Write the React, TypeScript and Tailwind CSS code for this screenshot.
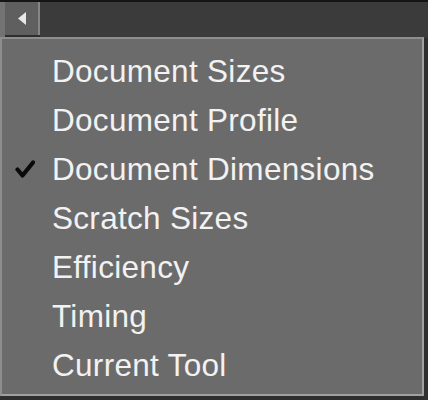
const items = [
  { label: 'Document Sizes' },
  { label: 'Document Profile' },
  { label: 'Document Dimensions', checked: true },
  { label: 'Scratch Sizes' },
  { label: 'Efficiency' },
  { label: 'Timing' },
  { label: 'Current Tool' },
];

export default function App() {
  return (
    <div className="relative w-[428px] h-[400px] overflow-hidden bg-[#2e2e2e] font-['Liberation_Sans',Arial,sans-serif]">
      <div className="h-[2px] bg-[#151515]" />
      <div className="flex h-[36px]">
        <div className="w-[5px] bg-[#737373]" />
        <div className="w-[35px] h-[33px] bg-[#5f5f5f] border-r-2 border-[#858585] flex items-center justify-center">
          <svg width="10" height="13" viewBox="0 0 10 13">
            <polygon points="9,0 9,13 1,6.5" fill="#e8e8e8" />
          </svg>
        </div>
        <div className="flex-1 bg-[#3b3b3b]" />
      </div>

      {/* dropdown menu */}
      <div className="absolute left-0 top-[37px] w-[424px] h-[359px] bg-[#6b6b6b] border-2 border-[#8e8e8e] border-r-[#a0a0a0] border-b-[#a0a0a0] pt-[8px]">
        {items.map((it) => (
          <div key={it.label} className="relative h-[49px] flex items-center pl-[50px]">
            {it.checked && (
              <svg className="absolute left-[13px] top-[14px]" width="20" height="20" viewBox="0 0 20 20">
                <path d="M2.5 10.5 L7.5 16.5 L18 3.5" fill="none" stroke="#0a0a0a" strokeWidth="4.2" strokeLinecap="round" strokeLinejoin="round" />
              </svg>
            )}
            <span className="text-[31.5px] leading-none text-[#f2f2f2] tracking-[0.3px]">{it.label}</span>
          </div>
        ))}
      </div>
    </div>
  );
}
